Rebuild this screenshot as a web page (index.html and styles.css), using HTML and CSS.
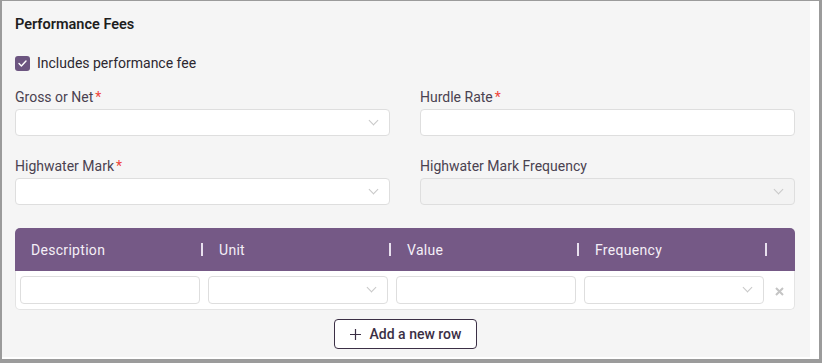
FILE: index.html
```html
<!DOCTYPE html>
<html lang="en">
<head>
    <meta charset="UTF-8">
    <meta name="viewport" content="width=device-width, initial-scale=1.0">
    <title>Performance Fees</title>
    <link rel="stylesheet" href="styles.css">
</head>
<body>
    <div class="frame">
        <div class="panel">
            <h2 class="title">Performance Fees</h2>

            <label class="check">
                <span class="box">
                    <svg width="11" height="11" viewBox="0 0 11 11"><path d="M2 5.6 L4.4 8 L9 3" fill="none" stroke="#fff" stroke-width="1.4" stroke-linecap="round" stroke-linejoin="round"/></svg>
                </span>
                Includes performance fee
            </label>

            <div class="fields">
                <div class="field">
                    <div class="label">Gross or Net<span class="req">*</span></div>
                    <div class="input select"><span class="chev"></span></div>
                </div>
                <div class="field">
                    <div class="label">Hurdle Rate<span class="req">*</span></div>
                    <div class="input"></div>
                </div>
                <div class="field">
                    <div class="label">Highwater Mark<span class="req">*</span></div>
                    <div class="input select"><span class="chev"></span></div>
                </div>
                <div class="field">
                    <div class="label">Highwater Mark Frequency</div>
                    <div class="input select disabled"><span class="chev"></span></div>
                </div>
            </div>

            <div class="table">
                <div class="thead">
                    <div class="th">Description</div>
                    <div class="th">Unit</div>
                    <div class="th">Value</div>
                    <div class="th">Frequency</div>
                </div>
                <div class="tbody">
                    <div class="input cell"></div>
                    <div class="input cell select"><span class="chev"></span></div>
                    <div class="input cell"></div>
                    <div class="input cell select"><span class="chev"></span></div>
                    <div class="remove">
                        <svg width="9" height="9" viewBox="0 0 9 9"><path d="M1 1 L8 8 M8 1 L1 8" stroke="#c4c4c4" stroke-width="2"/></svg>
                    </div>
                </div>
            </div>

            <div class="actions">
                <button class="add">
                    <svg width="13" height="13" viewBox="0 0 13 13"><path d="M6.5 1 V12 M1 6.5 H12" stroke="#3b2f45" stroke-width="1.2"/></svg>
                    Add a new row
                </button>
            </div>
        </div>
    </div>
</body>
</html>
```

FILE: styles.css
```css
body {
    margin: 0;
    font-family: Roboto, "Liberation Sans", sans-serif;
    color: #333;
}
.frame {
    width: 822px;
    height: 363px;
    box-sizing: border-box;
    border: 2px solid #9b9b9b;
    border-top-width: 1px;
    border-right-width: 3px;
    border-bottom-width: 4px;
    background: #fff;
}
.panel {
    background: #f5f5f5;
    margin-right: 9px;
    height: 356px;
    box-sizing: border-box;
    padding: 14px 15px 0 13px;
}
.title {
    margin: 0;
    font-size: 14.5px;
    line-height: 20px;
    font-weight: 600;
    color: #1e1e1e;
}
.check {
    display: flex;
    align-items: center;
    gap: 7px;
    margin-top: 18px;
    font-size: 14px;
    line-height: 20px;
    color: #2c2730;
}
.box {
    width: 15px;
    height: 15px;
    border-radius: 3px;
    background: #6c5580;
    display: flex;
    align-items: center;
    justify-content: center;
}
.fields {
    display: grid;
    grid-template-columns: 375px 375px;
    column-gap: 30px;
    row-gap: 20px;
    margin-top: 14px;
}
.label {
    font-size: 14px;
    line-height: 20px;
    color: #4a4250;
    margin-bottom: 2px;
}
.req {
    color: #f0443a;
    margin-left: 2px;
}
.input {
    height: 27px;
    box-sizing: border-box;
    background: #fff;
    border: 1px solid #dedede;
    border-radius: 4px;
    position: relative;
}
.input.disabled {
    background: #f3f3f3;
}
.chev {
    position: absolute;
    right: 12px;
    top: 7px;
    width: 6px;
    height: 6px;
    border-right: 1px solid #c8c8c8;
    border-bottom: 1px solid #c8c8c8;
    transform: rotate(45deg);
}
.table {
    margin-top: 23px;
    width: 780px;
}
.thead {
    display: flex;
    height: 43px;
    background: #755986;
    border-radius: 5px 5px 0 0;
    padding-right: 28px;
}
.th {
    width: 188px;
    box-sizing: border-box;
    padding-left: 16px;
    display: flex;
    align-items: center;
    font-size: 14px;
    font-weight: 400;
    letter-spacing: 0.3px;
    color: #f4eff7;
    position: relative;
}
.th::after {
    content: "";
    position: absolute;
    right: 0;
    top: 15px;
    width: 2px;
    height: 13px;
    background: #e8e0ee;
}
.tbody {
    display: flex;
    gap: 8px;
    align-items: center;
    height: 39px;
    box-sizing: border-box;
    background: #fff;
    border: 1px solid #e4e4e4;
    border-top: none;
    border-radius: 0 0 5px 5px;
    padding: 0 4px;
}
.input.cell {
    width: 180px;
    height: 28px;
}
.remove {
    width: 14px;
    display: flex;
    justify-content: center;
    padding-top: 2px;
}
.actions {
    display: flex;
    justify-content: center;
    margin-top: 9px;
}
.add {
    display: flex;
    align-items: center;
    gap: 8px;
    height: 30px;
    width: 143px;
    justify-content: center;
    background: #fff;
    border: 1px solid #3b2f45;
    border-radius: 4px;
    font-family: Roboto, "Liberation Sans", sans-serif;
    font-size: 14px;
    font-weight: 500;
    color: #3b2f45;
}
```
